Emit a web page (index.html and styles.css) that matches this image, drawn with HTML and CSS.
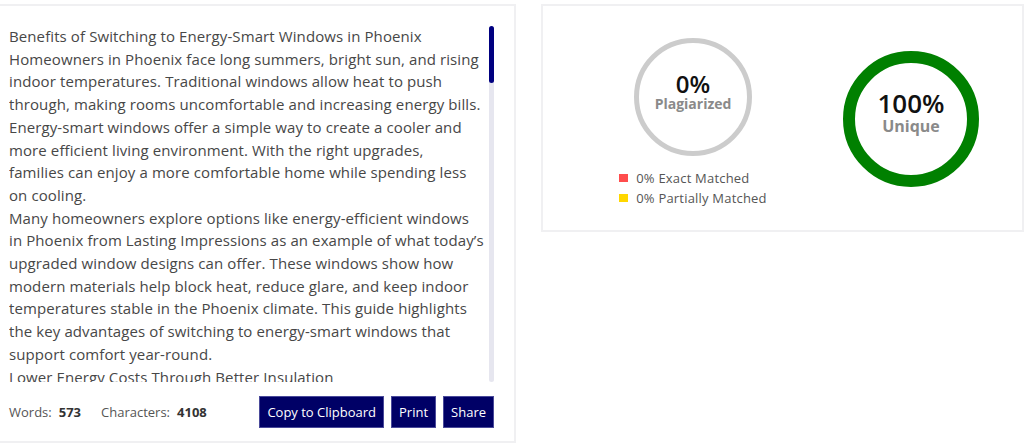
FILE: index.html
```html
<!DOCTYPE html>
<html>
<head>
<meta charset="utf-8">
<link rel="stylesheet" href="styles.css">
</head>
<body>
<div class="page">
  <section class="card editor">
    <div class="text-wrap">
      <div class="text">
        <p>Benefits of Switching to Energy-Smart Windows in Phoenix</p>
        <p>Homeowners in Phoenix face long summers, bright sun, and rising<br>indoor temperatures. Traditional windows allow heat to push<br>through, making rooms uncomfortable and increasing energy bills.<br>Energy-smart windows offer a simple way to create a cooler and<br>more efficient living environment. With the right upgrades,<br>families can enjoy a more comfortable home while spending less<br>on cooling.</p>
        <p>Many homeowners explore options like energy-efficient windows<br>in Phoenix from Lasting Impressions as an example of what today’s<br>upgraded window designs can offer. These windows show how<br>modern materials help block heat, reduce glare, and keep indoor<br>temperatures stable in the Phoenix climate. This guide highlights<br>the key advantages of switching to energy-smart windows that<br>support comfort year-round.</p>
        <p>Lower Energy Costs Through Better Insulation</p>
      </div>
      <div class="scrollbar"><div class="thumb"></div></div>
    </div>
    <div class="footer">
      <div class="stats">
        <div class="stat"><span>Words:</span><b>573</b></div>
        <div class="stat"><span>Characters:</span><b>4108</b></div>
      </div>
      <div class="actions">
        <button class="btn">Copy to Clipboard</button>
        <button class="btn">Print</button>
        <button class="btn">Share</button>
      </div>
    </div>
  </section>
  <section class="card results">
    <div class="plag">
      <div class="ring ring-gray">
        <span class="pct">0%</span>
        <span class="lbl">Plagiarized</span>
      </div>
      <ul class="legend">
        <li><span class="sw sw-red"></span>0% Exact Matched</li>
        <li><span class="sw sw-yellow"></span>0% Partially Matched</li>
      </ul>
    </div>
    <div class="ring ring-green">
      <span class="pct big">100%</span>
      <span class="lbl big">Unique</span>
    </div>
  </section>
</div>
</body>
</html>
```

FILE: styles.css
```css
* { box-sizing: border-box; }
html, body { margin: 0; padding: 0; background: #fff; }
body { font-family: "Open Sans", "DejaVu Sans", sans-serif; color: #444; }

.page {
  display: flex;
  align-items: flex-start;
  gap: 25px;
  padding-top: 4px;
  margin-left: -2px;
}

.card {
  background: #fff;
  border: 2px solid #f0f0f2;
}

.editor {
  width: 518px;
  height: 439px;
  padding: 19px 20px 0 9px;
  display: flex;
  flex-direction: column;
}

.text-wrap {
  display: flex;
  gap: 0;
  height: 357px;
}
.text {
  flex: 1;
  overflow: hidden;
  font-size: 15px;
  line-height: 22.7px;
  letter-spacing: 0.1px;
  color: #474747;
  white-space: nowrap;
}
.text p { margin: 0; }

.scrollbar {
  width: 5px;
  flex: none;
  background: #e6e6ef;
  border-radius: 3px;
  margin-top: 1px;
}
.thumb {
  height: 57px;
  background: #000080;
  border-radius: 3px;
}

.footer {
  display: flex;
  align-items: center;
  justify-content: space-between;
  margin-top: 14px;
}
.stats { display: flex; gap: 20px; font-size: 13px; color: #555; }
.stat { display: flex; gap: 7px; }
.stat b { color: #333; font-weight: 700; }

.actions { display: flex; gap: 7px; }
.btn {
  font-family: inherit;
  font-size: 13px;
  color: #fff;
  background: #000066;
  border: 1px solid #4a4a9a;
  height: 32px;
  padding: 0 7px;
  cursor: pointer;
}

.results {
  flex: 1;
  height: 228px;
  display: flex;
  align-items: flex-start;
  padding: 32px 0 0 74px;
  gap: 74px;
}

.plag { display: flex; flex-direction: column; align-items: center; width: 152px; }

.ring {
  border-radius: 50%;
  display: flex;
  flex-direction: column;
  align-items: center;
  justify-content: center;
  background: #fff;
  flex: none;
}
.ring-gray {
  width: 118px; height: 118px;
  border: 5px solid #cccccc;
  padding-bottom: 8px;
}
.ring-green {
  width: 136px; height: 136px;
  border: 12px solid #008000;
  margin-top: 13px;
  padding-bottom: 13px;
}

.pct { font-size: 24px; font-weight: 600; color: #111; line-height: 22px; }
.lbl { font-size: 14px; font-weight: 700; color: #8a8a8a; line-height: 18px; }
.pct.big { font-size: 26px; line-height: 26px; }
.lbl.big { font-size: 16px; line-height: 20px; }

.legend {
  list-style: none;
  margin: 12px 0 0 0;
  padding: 0;
  font-size: 13px;
  letter-spacing: 0.2px;
  color: #555;
}
.legend li { display: flex; align-items: center; gap: 8px; height: 20px; }
.sw { width: 9px; height: 8px; display: inline-block; }
.sw-red { background: #ff4d4d; }
.sw-yellow { background: #ffd700; }
```
